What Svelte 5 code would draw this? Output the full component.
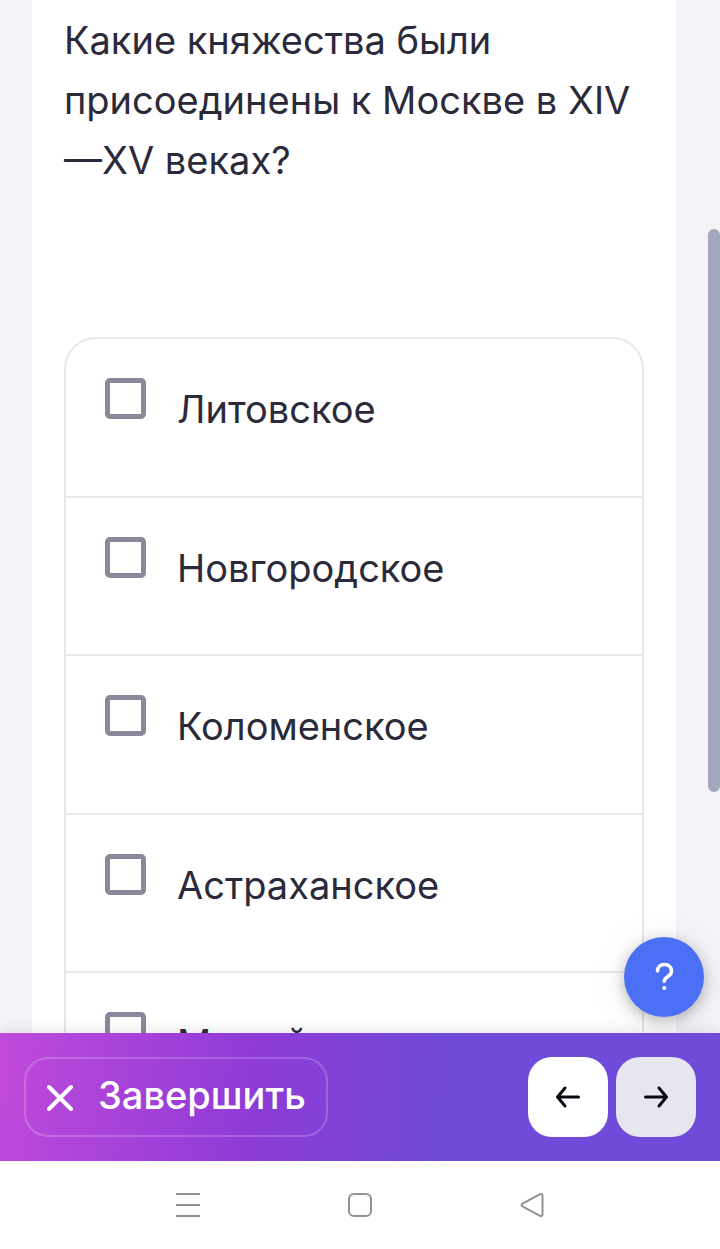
<script>
  const options = ['Литовское', 'Новгородское', 'Коломенское', 'Астраханское', 'Можайское'];
  let chosen = $state([]);
</script>

<div class="screen">
  <main>
    <section class="card">
      <h1>Какие княжества были присоединены к Москве в XIV<wbr />—XV веках?</h1>
      <div class="options">
        {#each options as option}
          <label>
            <input type="checkbox" value={option} bind:group={chosen} />
            <span>{option}</span>
          </label>
        {/each}
      </div>
    </section>
    <div class="scrollbar"></div>
    <button class="help" aria-label="Помощь">
      <svg width="40" height="40" viewBox="0 0 40 40" fill="none" stroke="#fff" stroke-width="3.600" stroke-linecap="round">
        <path d="M13.500 14C13.500 10 16.500 7.500 20.500 7.500s7 2.700 7 6.700c0 6-7 5-7.200 10" />
        <circle cx="20.300" cy="31" r="2" fill="#fff" stroke="none" />
      </svg>
    </button>
  </main>

  <footer>
    <button class="finish">
      <svg width="28" height="28" viewBox="0 0 28 28" fill="none" stroke="#fff" stroke-width="4" stroke-linecap="round">
        <path d="M3 4l22 22M25 4L3 26" />
      </svg>
      <span>Завершить</span>
    </button>
    <button class="step" aria-label="Назад">
      <svg width="28" height="28" viewBox="0 0 28 28" fill="none" stroke="#080810" stroke-width="3" stroke-linecap="round" stroke-linejoin="round">
        <path d="M24.500 14H4M11 5L3.500 14l7.500 9" />
      </svg>
    </button>
    <button class="step next" aria-label="Вперёд">
      <svg width="28" height="28" viewBox="0 0 28 28" fill="none" stroke="#080810" stroke-width="3" stroke-linecap="round" stroke-linejoin="round">
        <path d="M3.500 14h20.500M17 5l7.500 9-7.500 9" />
      </svg>
    </button>
  </footer>

  <nav>
    <button aria-label="Меню">
      <svg width="28" height="28" viewBox="0 0 28 28" fill="none" stroke="#929292" stroke-width="2">
        <path d="M2 3h24M2 14h24M2 25h24" />
      </svg>
    </button>
    <button aria-label="Домой">
      <svg width="28" height="28" viewBox="0 0 28 28" fill="none" stroke="#929292" stroke-width="2">
        <rect x="3" y="3" width="22" height="22" rx="5" />
      </svg>
    </button>
    <button aria-label="Назад">
      <svg width="28" height="28" viewBox="0 0 28 28" fill="none" stroke="#929292" stroke-width="2" stroke-linejoin="round">
        <path d="M4.500 12.700L22 3.200q2.500-1 2.500 1.500v18.600q0 2.500-2.500 1.500L4.500 15.300q-2-1.300 0-2.600z" />
      </svg>
    </button>
  </nav>
</div>

<style>
  :global(body) {
    margin: 0;
  }

  .screen {
    display: flex;
    flex-direction: column;
    height: 100vh;
    overflow: hidden;
    font-family: Inter, Roboto, sans-serif;
    color: #2b2a3a;
    background: #fff;
  }

  button {
    display: flex;
    align-items: center;
    justify-content: center;
    margin: 0;
    padding: 0;
    border: 0;
    font: inherit;
    cursor: pointer;
  }

  main {
    position: relative;
    flex: 1;
    min-height: 0;
    padding: 0 44px 0 32px;
    overflow: hidden;
    background: #f3f3f8;
  }

  .card {
    padding: 10px 32px;
    background: #fff;
  }

  h1 {
    margin: 0 0 147px;
    font-size: 38px;
    font-weight: 425;
    line-height: 60px;
  }

  .options {
    border: 2px solid #e9e9eb;
    border-radius: 32px;
  }

  label {
    display: flex;
    gap: 31px;
    box-sizing: border-box;
    height: 158px;
    padding: 39px;
    border-bottom: 2px solid #e9e9eb;
    font-size: 38px;
    font-weight: 425;
    line-height: 62px;
  }

  label:nth-child(odd) {
    height: 159px;
  }

  label:last-child {
    border-bottom: 0;
  }

  input {
    flex: none;
    box-sizing: border-box;
    width: 41px;
    height: 41px;
    margin: 0;
    border: 5px solid #8a889a;
    border-radius: 5px;
    background: #fff;
    appearance: none;
  }

  input:checked {
    background: #704ad9;
  }

  .scrollbar {
    position: absolute;
    top: 229px;
    right: 0;
    width: 12px;
    height: 563px;
    border-radius: 6px;
    background: #a3a8bd;
  }

  .help {
    position: absolute;
    right: 16px;
    bottom: 16px;
    width: 80px;
    height: 80px;
    border-radius: 50%;
    background: #4b70f5;
    box-shadow: 0 4px 14px rgba(0, 0, 0, 0.25), 0 4px 40px rgba(0, 0, 0, 0.08);
  }

  footer {
    position: relative;
    display: flex;
    gap: 8px;
    align-items: center;
    padding: 24px;
    background: linear-gradient(97deg, #c04adb 0%, #8f3bd7 35%, #704ad9 62%);
    box-shadow: 0 0 16px rgba(0, 0, 0, 0.12);
  }

  .finish {
    gap: 24px;
    box-sizing: border-box;
    height: 80px;
    margin-right: auto;
    padding: 0 20px;
    border: 2px solid rgba(255, 255, 255, 0.2);
    border-radius: 24px;
    background: transparent;
    color: #fff;
    font-size: 38px;
    font-weight: 475;
    line-height: 48px;
  }

  .finish span {
    padding-bottom: 4px;
  }

  .step {
    width: 80px;
    height: 80px;
    border-radius: 24px;
    background: #fff;
  }

  .next {
    background: #e6e7ee;
  }

  nav {
    position: relative;
    display: flex;
    justify-content: center;
    gap: 144px;
    padding: 30px 0;
    background: #fff;
  }

  nav button {
    background: transparent;
  }
</style>
